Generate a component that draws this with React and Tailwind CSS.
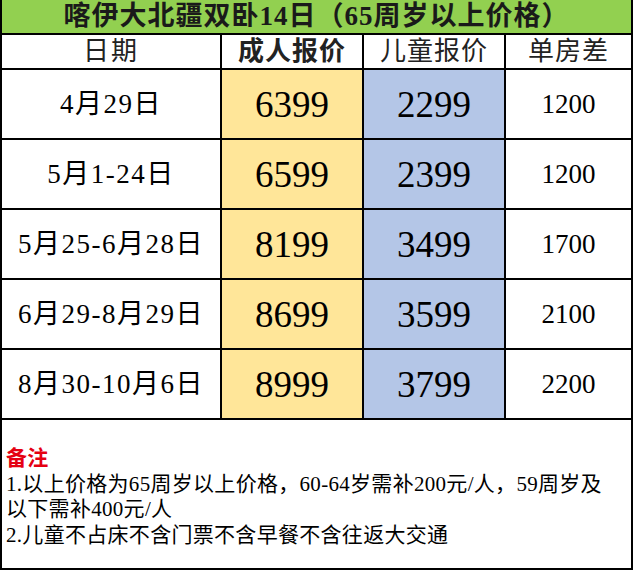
import React from 'react';

const rows = [
  { date: '4月29日', adult: '6399', child: '2299', single: '1200' },
  { date: '5月1-24日', adult: '6599', child: '2399', single: '1200' },
  { date: '5月25-6月28日', adult: '8199', child: '3499', single: '1700' },
  { date: '6月29-8月29日', adult: '8699', child: '3599', single: '2100' },
  { date: '8月30-10月6日', adult: '8999', child: '3799', single: '2200' },
];

const serif = { fontFamily: '"Liberation Serif", "Noto Sans CJK SC", serif' };

export default function App() {
  return (
    <div className="w-[633px] h-[570px] bg-white text-black" style={serif}>
      <div className="flex flex-col h-full border-x-2 border-b-2 border-black">
        {/* title */}
        <div className="h-[33px] bg-[#92D050] flex items-center justify-center text-[27px] font-bold text-[#1a1a1a] leading-none tracking-[1px]">
          喀伊大北疆双卧14日（65周岁以上价格）
        </div>

        {/* header */}
        <div className="flex h-[35px] border-t-2 border-black text-[26px] leading-none text-[#222]">
          <div className="w-[218px] flex items-center justify-center tracking-[2px]">日期</div>
          <div className="w-[142px] border-l-2 border-black flex items-center justify-center font-bold tracking-[1px]">成人报价</div>
          <div className="w-[142px] border-l-2 border-black flex items-center justify-center tracking-[1px]">儿童报价</div>
          <div className="flex-1 border-l-2 border-black flex items-center justify-center tracking-[1px]">单房差</div>
        </div>

        {rows.map(r => (
          <div key={r.date} className="flex h-[70px] border-t-2 border-black leading-none">
            <div className="w-[218px] flex items-center justify-center text-[27px] tracking-[1.5px]">{r.date}</div>
            <div className="w-[142px] border-l-2 border-black bg-[#FFE699] flex items-center justify-center text-[37px]">{r.adult}</div>
            <div className="w-[142px] border-l-2 border-black bg-[#B4C6E7] flex items-center justify-center text-[37px]">{r.child}</div>
            <div className="flex-1 border-l-2 border-black flex items-center justify-center text-[27px]">{r.single}</div>
          </div>
        ))}

        {/* notes */}
        <div className="flex-1 border-t-2 border-black pt-[26px] pl-[4px] text-[21px] leading-[25.5px] tracking-[0.3px]">
          <p className="text-[#e50012] font-bold">备注</p>
          <p>1.以上价格为65周岁以上价格，60-64岁需补200元/人，59周岁及<br />以下需补400元/人</p>
          <p>2.儿童不占床不含门票不含早餐不含往返大交通</p>
        </div>
      </div>
    </div>
  );
}
